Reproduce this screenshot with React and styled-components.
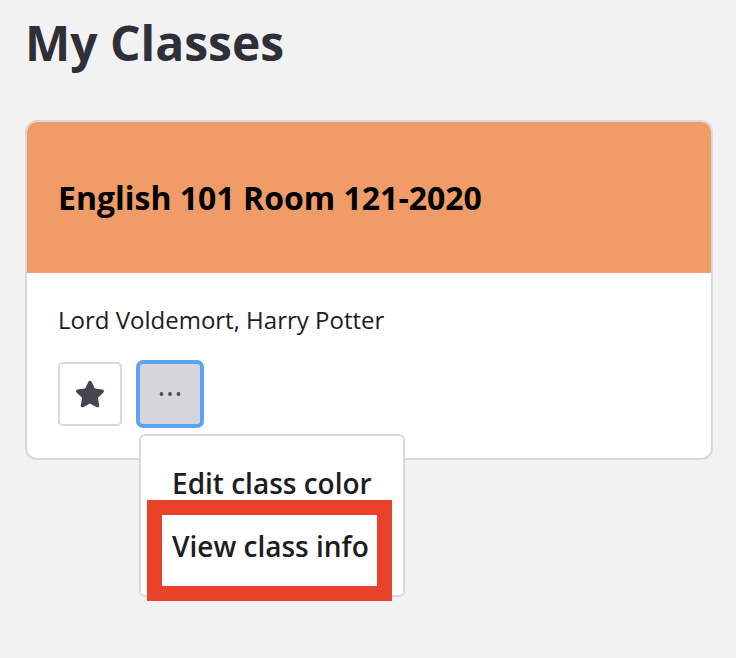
import React from 'react';
import styled, { createGlobalStyle } from 'styled-components';
import { FaStar } from 'react-icons/fa';

const GlobalStyle = createGlobalStyle`
  body {
    margin: 0;
    background: #f2f2f2;
    font-family: "Open Sans", "Noto Sans", sans-serif;
  }
`;

const Page = styled.main`
  min-height: 100vh;
  box-sizing: border-box;
  padding: 14px 23px 40px 25px;
`;

const Title = styled.h1`
  margin: 0 0 48px 0;
  font-size: 48px;
  line-height: 1.2;
  font-weight: 700;
  color: #2f2f3a;
`;

const Card = styled.section`
  width: 688px;
  box-sizing: border-box;
  background: #fff;
  border: 2px solid #d9d9d9;
  border-radius: 12px;
`;

const CardHeader = styled.header`
  height: 151px;
  display: flex;
  align-items: center;
  padding-left: 31px;
  background: ${(p) => p.color};
  border-radius: 10px 10px 0 0;
`;

const ClassName = styled.h2`
  margin: 0;
  font-size: 32px;
  font-weight: 700;
  color: #000;
`;

const CardBody = styled.div`
  padding: 30px 31px 32px;
`;

const Teachers = styled.p`
  margin: 0 0 26px 0;
  font-size: 24px;
  line-height: 1.4;
  color: #1c1c1c;
`;

const Actions = styled.div`
  display: flex;
  gap: 16px;
`;

const IconButton = styled.button`
  width: 64px;
  height: 64px;
  box-sizing: border-box;
  display: flex;
  align-items: center;
  justify-content: center;
  border-radius: 5px;
  border: 2px solid ${(p) => (p.$active ? '#5aa3f4' : '#d9d9d9')};
  box-shadow: ${(p) => (p.$active ? '0 0 0 2px #5aa3f4' : 'none')};
  background: ${(p) => (p.$active ? '#d6d6da' : '#fff')};
  color: #45454f;
  padding: 0;
  cursor: pointer;
`;

const MenuAnchor = styled.div`
  position: relative;
`;

const Menu = styled.ul`
  position: absolute;
  top: calc(100% + 8px);
  left: 1px;
  width: 266px;
  box-sizing: border-box;
  margin: 0;
  padding: 15px 0 18px;
  list-style: none;
  background: #fff;
  border: 2px solid #d9d9d9;
  border-radius: 6px;
  z-index: 2;
`;

const MenuItem = styled.li`
  height: 63px;
  display: flex;
  align-items: center;
  padding-left: 31px;
  font-size: 28px;
  font-weight: 600;
  color: #1c1c22;
  white-space: nowrap;
`;

const Highlight = styled.div`
  position: absolute;
  left: 6px;
  top: 64px;
  width: 245px;
  height: 101px;
  box-sizing: border-box;
  border: 15px solid #e8432a;
  pointer-events: none;
`;

function Dots() {
  return (
    <svg width="24" height="8" viewBox="0 0 24 8" fill="#4a4a55">
      <circle cx="3.5" cy="4" r="1.9" />
      <circle cx="12" cy="4" r="1.9" />
      <circle cx="20.5" cy="4" r="1.9" />
    </svg>
  );
}

export default function App() {
  const menu = ['Edit class color', 'View class info'];
  return (
    <>
      <GlobalStyle />
      <Page>
        <Title>My Classes</Title>
        <Card>
          <CardHeader color="#ef9c68">
            <ClassName>English 101 Room 121-2020</ClassName>
          </CardHeader>
          <CardBody>
            <Teachers>Lord Voldemort, Harry Potter</Teachers>
            <Actions>
              <IconButton aria-label="Favorite">
                <FaStar size={30} />
              </IconButton>
              <MenuAnchor>
                <IconButton $active aria-label="More options">
                  <Dots />
                </IconButton>
                <Menu>
                  {menu.map((item) => (
                    <MenuItem key={item}>{item}</MenuItem>
                  ))}
                  <Highlight />
                </Menu>
              </MenuAnchor>
            </Actions>
          </CardBody>
        </Card>
      </Page>
    </>
  );
}
